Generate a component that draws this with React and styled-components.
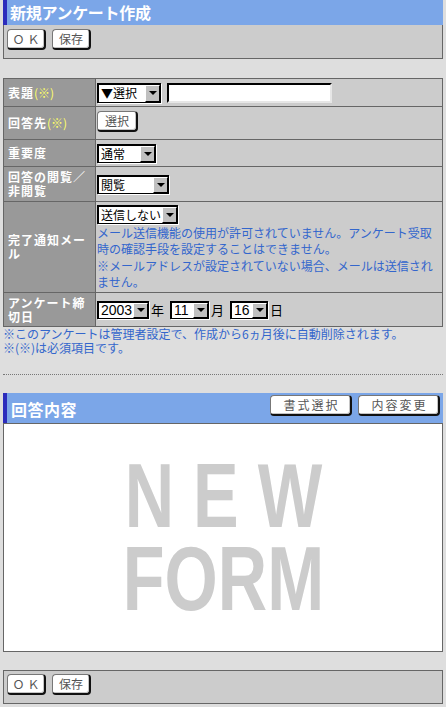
import React from 'react'
import styled, { createGlobalStyle } from 'styled-components'

const GlobalStyle = createGlobalStyle`
  body {
    margin: 0;
    background: #dedede;
    font-family: "Noto Sans CJK JP", sans-serif;
    font-size: 12px;
    color: #000;
  }
`

const Page = styled.div`
  padding: 0 3px;
`

const TitleBar = styled.h1`
  margin: 0;
  height: 25px;
  line-height: 25px;
  padding-left: 3px;
  background: #7ba6e8;
  border-left: 4px solid #2c2cbc;
  color: #fff;
  font-size: 16px;
  font-weight: bold;
  letter-spacing: -0.3px;
`

const Toolbar = styled.div`
  display: flex;
  align-items: flex-start;
  gap: 6px;
  box-sizing: border-box;
  height: 34px;
  margin-top: ${p => (p.$bottom ? '18px' : '0')};
  padding: ${p => (p.$bottom ? '3px' : '4px')} 3px 0;
  background: #ccc;
  border: 1px solid #666;
  border-top: ${p => (p.$bottom ? '1px solid #666' : 'none')};
`

const Button = styled.button`
  box-sizing: border-box;
  width: ${p => p.$w}px;
  height: 21px;
  padding: 0;
  background: #fff;
  border: 1px solid #777;
  border-right: 2px solid #111;
  border-bottom: 2px solid #111;
  border-radius: 4px;
  box-shadow: inset -1px -1px 0 #c4c4c4;
  color: #555;
  font-family: "Noto Sans CJK JP", sans-serif;
  font-size: 12px;
  line-height: 1;
  letter-spacing: ${p => p.$ls || 0}px;
  text-indent: ${p => p.$ls || 0}px;
`

const FormTable = styled.table`
  width: 100%;
  margin-top: 19px;
  border-collapse: collapse;
  border: 1px solid #666;
`

const Row = styled.tr`
  height: ${p => p.$h}px;
`

const Label = styled.th`
  width: 84px;
  padding: 0 3px 0 4px;
  background: #999;
  border: 1px solid #666;
  color: #fff;
  font-size: 12px;
  font-weight: bold;
  letter-spacing: 1px;
  line-height: 14px;
  text-align: left;
  vertical-align: middle;
`

const Req = styled.span`
  color: #ffff66;
  font-weight: normal;
  letter-spacing: 0;
`

const Cell = styled.td`
  padding: ${p => p.$pad || '0 2px 0 1px'};
  background: #ccc;
  border: 1px solid #666;
  vertical-align: middle;
  line-height: 14px;
`

const CellLine = styled.div`
  display: flex;
  align-items: center;
`

const Select = styled.span`
  display: inline-flex;
  box-sizing: border-box;
  flex: none;
  width: ${p => p.$w}px;
  height: ${p => p.$h || 19}px;
  background: #fff;
  border: 1px solid #000;
  border-top-width: 2px;
  border-left-width: 2px;
  box-shadow: 1px 1px 0 #fff;
  font-family: ${p => (p.$num ? '"Liberation Sans", Arial, sans-serif' : '"Noto Sans CJK JP", sans-serif')};
  font-size: ${p => (p.$num ? 14 : 12)}px;
`

const SelectValue = styled.span`
  flex: 1;
  display: flex;
  align-items: center;
  padding-left: 2px;
  white-space: nowrap;
  overflow: hidden;
`

const SelectArrow = styled.span`
  flex: none;
  display: flex;
  align-items: center;
  justify-content: center;
  box-sizing: border-box;
  width: 15px;
  background: #c0c0c0;
  border: 1px solid;
  border-color: #fff #000 #000 #fff;

  &::after {
    content: '';
    border-left: 4px solid transparent;
    border-right: 4px solid transparent;
    border-top: 4px solid #000;
  }
`

const TextInput = styled.input`
  box-sizing: border-box;
  width: 165px;
  height: 20px;
  margin: 0 0 0 6px;
  padding: 0 2px;
  background: #fff;
  border: 2px solid #000;
  border-right: 2px solid #e6e6e6;
  border-bottom: 2px solid #e6e6e6;
  outline: none;
`

const MailNote = styled.div`
  margin-top: 1px;
  color: #3366cc;
  line-height: 16.5px;
`

const DateUnit = styled.span`
  margin: 0 6px 0 2px;
  font-size: 13px;
`

const Notes = styled.p`
  margin: 0;
  color: #3366cc;
  line-height: 14px;
`

const Divider = styled.hr`
  height: 0;
  margin: 19px 0 0;
  border: none;
  border-top: 1px dotted #777;
`

const SectionBar = styled.div`
  display: flex;
  align-items: flex-start;
  justify-content: space-between;
  box-sizing: border-box;
  height: 30px;
  margin-top: 18px;
  padding: 2px 3px 0 4px;
  background: #7ba6e8;
  border-left: 4px solid #2c2cbc;
`

const SectionTitle = styled.h2`
  align-self: center;
  margin: 0;
  color: #fff;
  font-size: 16px;
  font-weight: bold;
  letter-spacing: 0.5px;
`

const BarButtons = styled.div`
  display: flex;
  gap: 6px;
`

const FormBox = styled.div`
  display: flex;
  align-items: center;
  justify-content: center;
  box-sizing: border-box;
  height: 229px;
  background: #fff;
  border: 1px solid #666;
`

const BigText = styled.div`
  color: #cccccc;
  font-family: "Liberation Sans", Arial, sans-serif;
  font-size: 90px;
  font-weight: bold;
  line-height: 83px;
  text-align: center;
  white-space: pre;
  transform: scaleX(0.76);
`

const Dropdown = ({ w, h, num, children }) => (
  <Select $w={w} $h={h} $num={num}>
    <SelectValue>{children}</SelectValue>
    <SelectArrow />
  </Select>
)

const Actions = ({ bottom }) => (
  <Toolbar $bottom={bottom}>
    <Button $w={39} $ls={3}>ＯＫ</Button>
    <Button $w={39}>保存</Button>
  </Toolbar>
)

export default function App() {
  return (
    <Page>
      <GlobalStyle />
      <TitleBar>新規アンケート作成</TitleBar>
      <Actions />

      <FormTable>
        <tbody>
          <Row $h={28}>
            <Label>表題<Req>(※)</Req></Label>
            <Cell>
              <CellLine>
                <Dropdown w={64} h={20}>▼選択</Dropdown>
                <TextInput type="text" />
              </CellLine>
            </Cell>
          </Row>
          <Row $h={33}>
            <Label>回答先<Req>(※)</Req></Label>
            <Cell $pad="0 2px 4px 1px">
              <CellLine>
                <Button $w={41}>選択</Button>
              </CellLine>
            </Cell>
          </Row>
          <Row $h={27}>
            <Label>重要度</Label>
            <Cell>
              <CellLine>
                <Dropdown w={59}>通常</Dropdown>
              </CellLine>
            </Cell>
          </Row>
          <Row $h={35}>
            <Label>回答の閲覧／非閲覧</Label>
            <Cell>
              <CellLine>
                <Dropdown w={72}>閲覧</Dropdown>
              </CellLine>
            </Cell>
          </Row>
          <Row $h={91}>
            <Label>完了通知メール</Label>
            <Cell $pad="1px 2px 0 1px">
              <CellLine>
                <Dropdown w={81}>送信しない</Dropdown>
              </CellLine>
              <MailNote>
                メール送信機能の使用が許可されていません。アンケート受取時の確認手段を設定することはできません。
                <br />
                ※メールアドレスが設定されていない場合、メールは送信されません。
              </MailNote>
            </Cell>
          </Row>
          <Row $h={34}>
            <Label>アンケート締切日</Label>
            <Cell>
              <CellLine>
                <Dropdown w={52} h={18} num>2003</Dropdown>
                <DateUnit>年</DateUnit>
                <Dropdown w={39} h={18} num>11</Dropdown>
                <DateUnit>月</DateUnit>
                <Dropdown w={38} h={18} num>16</Dropdown>
                <DateUnit>日</DateUnit>
              </CellLine>
            </Cell>
          </Row>
        </tbody>
      </FormTable>

      <Notes>
        ※このアンケートは管理者設定で、作成から6ヵ月後に自動削除されます。
        <br />
        ※(※)は必須項目です。
      </Notes>

      <Divider />

      <SectionBar>
        <SectionTitle>回答内容</SectionTitle>
        <BarButtons>
          <Button $w={82} $ls={2}>書式選択</Button>
          <Button $w={82} $ls={2}>内容変更</Button>
        </BarButtons>
      </SectionBar>

      <FormBox>
        <BigText>{'N E W\nFORM'}</BigText>
      </FormBox>

      <Actions bottom />
    </Page>
  )
}
